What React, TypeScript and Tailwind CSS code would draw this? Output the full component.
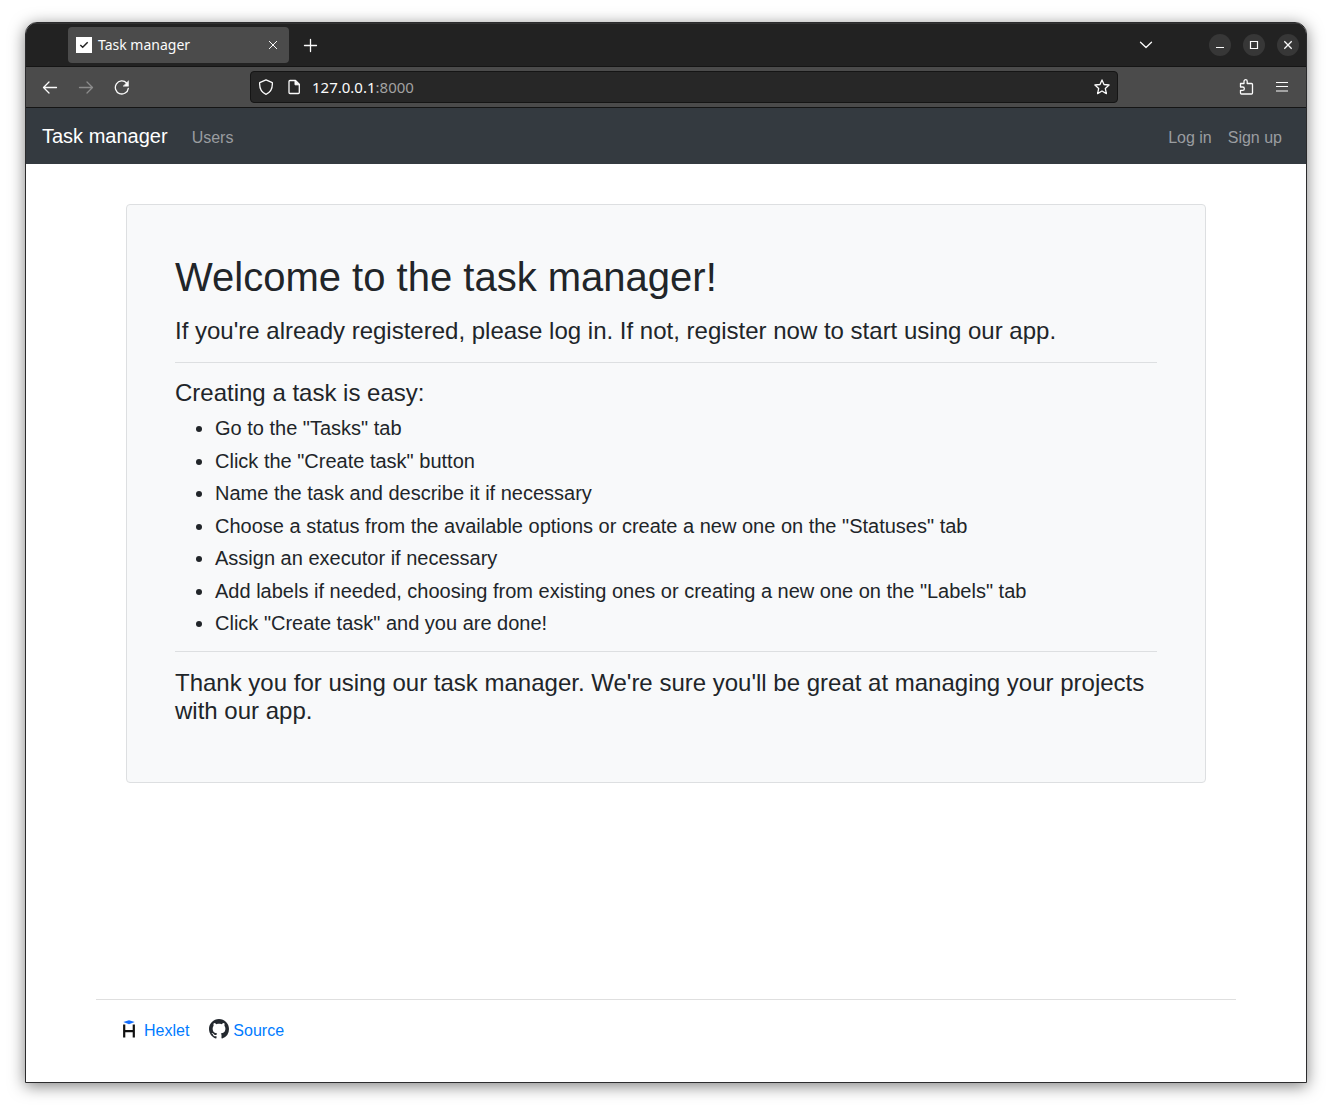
import type { ReactNode } from "react";

const steps = [
  'Go to the "Tasks" tab',
  'Click the "Create task" button',
  "Name the task and describe it if necessary",
  'Choose a status from the available options or create a new one on the "Statuses" tab',
  "Assign an executor if necessary",
  'Add labels if needed, choosing from existing ones or creating a new one on the "Labels" tab',
  'Click "Create task" and you are done!',
];

function Glyph({ children, className = "size-4" }: { children: ReactNode; className?: string }) {
  return (
    <svg
      viewBox="0 0 16 16"
      className={className}
      fill="none"
      stroke="currentColor"
      strokeWidth="1.3"
      strokeLinecap="round"
      strokeLinejoin="round"
      aria-hidden="true"
    >
      {children}
    </svg>
  );
}

function TitleBar() {
  return (
    <div className="flex h-11 items-center border-t border-b border-t-[#333333] border-b-[#151515] bg-[#222222] pr-[7px] pl-[42px]">
      <div className="flex h-9 w-[221px] items-center rounded bg-[#4b4b4b] px-2">
        <svg viewBox="0 0 16 16" className="size-4 shrink-0" aria-hidden="true">
          <rect width="16" height="16" fill="#ffffff" />
          <path d="M4.300 8 6.700 10.200 11.700 5.300" fill="none" stroke="#222222" strokeWidth="1.500" />
        </svg>
        <span className="ml-1.5 flex-1 text-sm">Task manager</span>
        <button aria-label="Close tab">
          <Glyph>
            <path d="M4.300 4.300l7.400 7.400M11.700 4.300l-7.400 7.400" strokeWidth="1" />
          </Glyph>
        </button>
      </div>
      <button aria-label="New tab" className="ml-3.5">
        <Glyph>
          <path d="M7.500 2.500v12M1.500 8.500h12" />
        </Glyph>
      </button>
      <button aria-label="List all tabs" className="mr-[55px] ml-auto">
        <Glyph>
          <path d="M2.500 5.200 8 10.500l5.500-5.300" />
        </Glyph>
      </button>
      <div className="flex gap-3">
        <button aria-label="Minimize" className="grid size-[22px] place-items-center rounded-full bg-[#373737]">
          <Glyph>
            <path d="M4 10.500h8" strokeWidth="1" strokeLinecap="butt" />
          </Glyph>
        </button>
        <button aria-label="Maximize" className="grid size-[22px] place-items-center rounded-full bg-[#373737]">
          <Glyph>
            <path d="M4.500 4.500h7v7h-7z" strokeWidth="1.200" strokeLinejoin="miter" />
          </Glyph>
        </button>
        <button aria-label="Close" className="grid size-[22px] place-items-center rounded-full bg-[#373737]">
          <Glyph>
            <path d="M4.300 4.300l7.400 7.400M11.700 4.300l-7.400 7.400" strokeLinecap="butt" />
          </Glyph>
        </button>
      </div>
    </div>
  );
}

function Toolbar() {
  return (
    <div className="flex h-[41px] items-center border-b border-[#151515] bg-[#4b4b4b] px-4">
      <div className="mr-9 flex flex-1 gap-5">
        <button aria-label="Back">
          <Glyph>
            <path d="M7 3 1.500 8.500 7 14M1.500 8.500h13" />
          </Glyph>
        </button>
        <button aria-label="Forward" className="text-[#8c8c8c]">
          <Glyph>
            <path d="M9 3 14.500 8.500 9 14M14.500 8.500h-13" />
          </Glyph>
        </button>
        <button aria-label="Reload">
          <Glyph>
            <path d="M14.300 9.300A6.500 6.500 0 1 1 12.600 4" />
            <path d="M14.500 2.100v5.100H9.400z" fill="currentColor" strokeWidth="0.500" />
          </Glyph>
        </button>
      </div>
      <div className="flex h-8 w-[868px] items-center rounded border border-[#151515] bg-[#272727] px-[7px]">
        <Glyph>
          <path d="M8 .8 14.300 3.600C14.700 9 12.500 13.500 8 15.300 3.500 13.500 1.300 9 1.700 3.600z" />
        </Glyph>
        <Glyph className="ml-3 size-4">
          <path d="M4 1.500h5.500L13.300 5.300V13.500a1 1 0 0 1-1 1H4a1 1 0 0 1-1-1v-11a1 1 0 0 1 1-1z" />
          <path d="M9 1.500v4.300h4.300z" fill="currentColor" strokeWidth="1" />
        </Glyph>
        <div className="ml-2.5 flex-1 text-[15px]">
          127.0.0.1<span className="text-[#a2a2a2]">:8000</span>
        </div>
        <button aria-label="Bookmark this page">
          <Glyph>
            <path d="M8 .9 10 5.500l5.100.5-3.800 3.400 1.100 5.200L8 12l-4.400 2.600 1.100-5.200L.9 6 6 5.500z" />
          </Glyph>
        </button>
      </div>
      <div className="flex flex-1 justify-end gap-5">
        <button aria-label="Extensions">
          <Glyph>
            <path d="M2.500 4.500H6V2.300a1.600 1.600 0 0 1 3.200 0V4.500h4.300a1 1 0 0 1 1 1v8.500a1 1 0 0 1-1 1H3.500a1 1 0 0 1-1-1v-2.700h2.200a1.600 1.600 0 0 0 0-3.300H2.500z" />
          </Glyph>
        </button>
        <button aria-label="Open application menu">
          <Glyph>
            <path d="M2 3.500h12M2 7.500h12M2 12h12" strokeWidth="1.200" strokeLinecap="butt" />
          </Glyph>
        </button>
      </div>
    </div>
  );
}

function HexletLogo() {
  return (
    <svg viewBox="0 0 20 20" className="size-5" aria-hidden="true">
      <path d="M3.300 3 9 1.200 14.700 3 9 5.200z" fill="#116dff" />
      <path d="M4.200 5.500v13M13.800 5.500v13M4 12.200h10" fill="none" stroke="#111111" strokeWidth="2.200" />
    </svg>
  );
}

function GithubLogo() {
  return (
    <svg viewBox="0 0 16 16" className="size-5" fill="#24292f" aria-hidden="true">
      <path d="M8 0C3.580 0 0 3.580 0 8c0 3.540 2.290 6.530 5.470 7.590.4.070.55-.17.55-.38 0-.19-.01-.82-.01-1.490-2.010.37-2.530-.49-2.690-.94-.09-.23-.48-.94-.82-1.130-.28-.15-.68-.52-.01-.53.63-.01 1.080.58 1.230.82.72 1.210 1.870.87 2.330.66.07-.52.28-.87.51-1.070-1.780-.2-3.640-.89-3.640-3.950 0-.87.31-1.590.82-2.150-.08-.2-.36-1.020.08-2.120 0 0 .67-.21 2.200.82.64-.18 1.320-.27 2-.27s1.360.09 2 .27c1.530-1.040 2.200-.82 2.200-.82.44 1.100.16 1.920.08 2.120.51.56.82 1.270.82 2.150 0 3.070-1.870 3.750-3.650 3.950.29.25.54.73.54 1.480 0 1.070-.01 1.930-.01 2.200 0 .21.15.46.55.38A8.010 8.010 0 0 0 16 8c0-4.420-3.580-8-8-8z" />
    </svg>
  );
}

export default function App() {
  return (
    <div className="flex min-h-screen flex-col bg-white px-[25px] pt-[22px] pb-7 font-['Liberation_Sans',Arial,sans-serif] text-[#212529]">
      <div className="flex flex-1 flex-col overflow-hidden rounded-t-xl border border-[#2b2b2d] bg-white shadow-[0_3px_16px_rgba(0,0,0,0.5)]">
        <header className="font-['Noto_Sans',sans-serif] text-[#fbfbfb]">
          <TitleBar />
          <Toolbar />
        </header>

        <nav className="flex h-14 items-baseline bg-[#343a40] px-4 pt-3.5 text-[#9a9da0]">
          <a href="#" className="mr-4 text-xl text-white">
            Task manager
          </a>
          <a href="#users" className="px-2">
            Users
          </a>
          <div className="ml-auto flex">
            <a href="#login" className="px-2">
              Log in
            </a>
            <a href="#signup" className="px-2">
              Sign up
            </a>
          </div>
        </nav>

        <main className="mx-auto w-full max-w-[1140px] px-[30px] pt-10 pb-12">
          <section className="rounded border border-[#dddfe1] bg-[#f8f9fa] p-12">
            <h1 className="mb-4 text-[40px] leading-12">Welcome to the task manager!</h1>
            <p className="text-2xl leading-7">
              If you're already registered, please log in. If not, register now to start using our app.
            </p>
            <hr className="mt-[17px] mb-4 border-[#dddfe1]" />
            <h2 className="mb-[5px] text-2xl leading-7">Creating a task is easy:</h2>
            <ul className="list-disc pl-10 text-xl leading-relaxed">
              {steps.map((step) => (
                <li key={step}>{step}</li>
              ))}
            </ul>
            <hr className="mt-[11px] mb-[17px] border-[#dddfe1]" />
            <p className="mb-[9px] text-2xl leading-7">
              Thank you for using our task manager. We're sure you'll be great at managing your projects with our app.
            </p>
          </section>
        </main>

        <footer className="mx-auto mt-auto flex w-full max-w-[1140px] gap-5 border-t border-[#dfdfdf] px-6 pt-[19px] pb-[39px] text-[#007bff]">
          <a href="#hexlet" className="flex gap-1">
            <HexletLogo />
            Hexlet
          </a>
          <a href="#source" className="flex gap-1">
            <GithubLogo />
            Source
          </a>
        </footer>
      </div>
    </div>
  );
}
